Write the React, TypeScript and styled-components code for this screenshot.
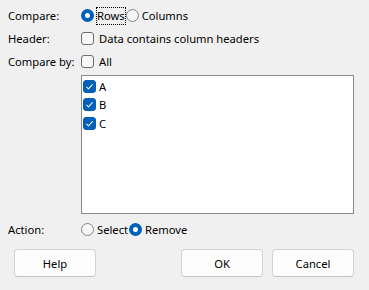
import styled, { createGlobalStyle } from 'styled-components'

const GlobalStyle = createGlobalStyle`
  html, body {
    margin: 0;
    padding: 0;
    background: #f0f0f0;
  }
  body {
    font-family: 'Noto Sans', 'Open Sans', sans-serif;
    font-size: 11.2px;
    color: #000;
  }
`

const Dialog = styled.div`
  width: 369px;
  height: 290px;
  box-sizing: border-box;
  padding: 4px 15px 0 8px;
  display: flex;
  flex-direction: column;
`

const FieldRow = styled.div`
  display: grid;
  grid-template-columns: 73px 1fr;
  align-items: center;
  height: 23px;
`

const FieldLabel = styled.span`
  line-height: 16px;
`

const Options = styled.div`
  display: flex;
  align-items: center;
`

const Option = styled.label<{ $gap: number }>`
  display: inline-flex;
  align-items: center;
  gap: ${({ $gap }) => $gap}px;
  line-height: 15px;
`

const OptionText = styled.span<{ $focused?: boolean }>`
  border: 1px dotted ${({ $focused }) => ($focused ? '#000' : 'transparent')};
  padding: 0 0 1px;
`

const RadioMark = styled.span<{ $checked?: boolean }>`
  width: 13px;
  height: 13px;
  box-sizing: border-box;
  border-radius: 50%;
  flex-shrink: 0;
  ${({ $checked }) =>
    $checked
      ? `background: #fff; border: 4px solid #005fb8;`
      : `background: #f7f7f7; border: 1px solid #858585;`}
`

const CheckMark = styled.span<{ $checked?: boolean }>`
  width: 13px;
  height: 13px;
  box-sizing: border-box;
  border-radius: 3px;
  flex-shrink: 0;
  display: inline-flex;
  align-items: center;
  justify-content: center;
  ${({ $checked }) =>
    $checked
      ? `background: #005fb8; border: 1px solid #005fb8;`
      : `background: #f7f7f7; border: 1px solid #6f6f6f;`}
`

const ListBox = styled.div`
  margin: 2px 0 0 73px;
  height: 139px;
  box-sizing: border-box;
  border: 1px solid #868a91;
  background: #fff;
  padding: 1px 1px 0;
`

const ListItem = styled.label`
  display: flex;
  align-items: center;
  gap: 3px;
  height: 18.5px;
`

const ActionRow = styled(FieldRow)`
  margin-top: 4px;
`

const ButtonBar = styled.div`
  display: flex;
  margin-top: 8px;
  padding-left: 6px;
  gap: 9px;
`

const Button = styled.button<{ $push?: boolean }>`
  width: 82px;
  height: 28px;
  box-sizing: border-box;
  border: 1px solid #d2d2d2;
  border-bottom-color: #c2c2c2;
  border-radius: 4px;
  background: #fdfdfd;
  font: inherit;
  color: #000;
  padding: 0;
  margin-left: ${({ $push }) => ($push ? 'auto' : '0')};
`

const Check = () => (
  <svg width="9" height="9" viewBox="0 0 9 9">
    <path d="M1.4 4.8 L3.5 6.8 L7.6 2.4" fill="none" stroke="#fff" strokeWidth="1.1" />
  </svg>
)

const Radio = ({ label, checked, focused }: { label: string; checked?: boolean; focused?: boolean }) => (
  <Option $gap={2}>
    <RadioMark $checked={checked} />
    <OptionText $focused={focused}>{label}</OptionText>
  </Option>
)

const CheckBox = ({ label, checked }: { label: string; checked?: boolean }) => (
  <Option $gap={4}>
    <CheckMark $checked={checked}>{checked && <Check />}</CheckMark>
    <OptionText>{label}</OptionText>
  </Option>
)

const columns = ['A', 'B', 'C']

const App = () => {
  return (
    <>
      <GlobalStyle />
      <Dialog>
        <FieldRow>
          <FieldLabel>Compare:</FieldLabel>
          <Options>
            <Radio label="Rows" checked focused />
            <Radio label="Columns" />
          </Options>
        </FieldRow>
        <FieldRow>
          <FieldLabel>Header:</FieldLabel>
          <Options>
            <CheckBox label="Data contains column headers" />
          </Options>
        </FieldRow>
        <FieldRow>
          <FieldLabel>Compare by:</FieldLabel>
          <Options>
            <CheckBox label="All" />
          </Options>
        </FieldRow>
        <ListBox>
          {columns.map((c) => (
            <ListItem key={c}>
              <CheckMark $checked>
                <Check />
              </CheckMark>
              {c}
            </ListItem>
          ))}
        </ListBox>
        <ActionRow>
          <FieldLabel>Action:</FieldLabel>
          <Options>
            <Radio label="Select" />
            <Radio label="Remove" checked />
          </Options>
        </ActionRow>
        <ButtonBar>
          <Button>Help</Button>
          <Button $push>OK</Button>
          <Button>Cancel</Button>
        </ButtonBar>
      </Dialog>
    </>
  )
}

export default App
